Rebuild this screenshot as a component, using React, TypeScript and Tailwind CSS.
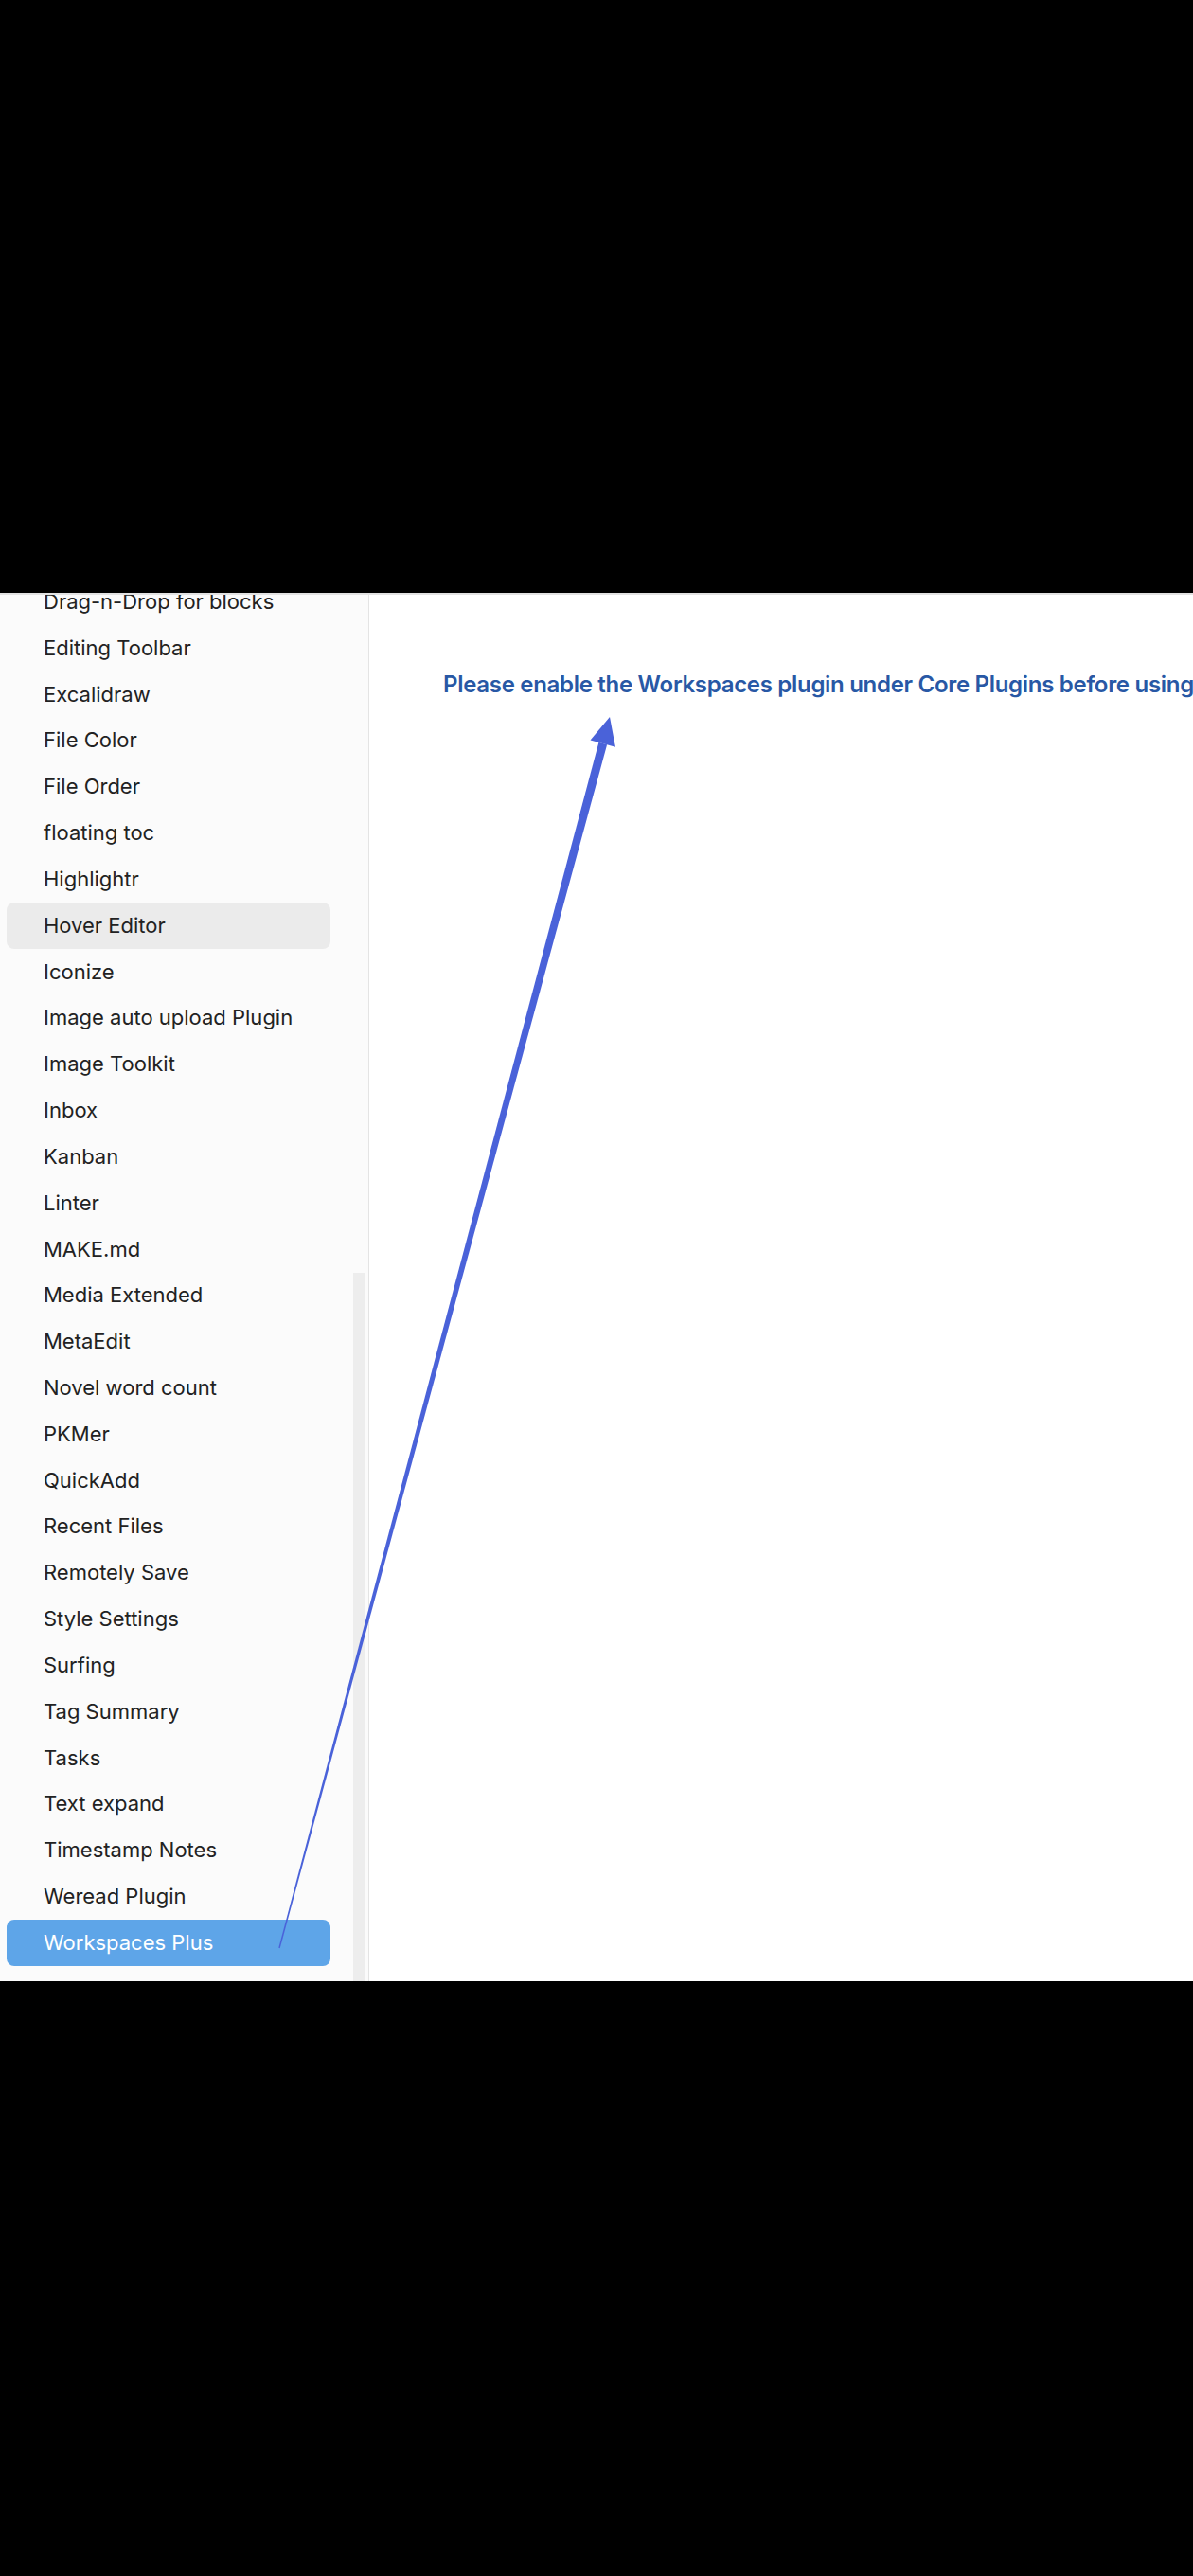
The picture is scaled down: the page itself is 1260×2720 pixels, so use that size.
const plugins = [
  "Drag-n-Drop for blocks",
  "Editing Toolbar",
  "Excalidraw",
  "File Color",
  "File Order",
  "floating toc",
  "Highlightr",
  "Hover Editor",
  "Iconize",
  "Image auto upload Plugin",
  "Image Toolkit",
  "Inbox",
  "Kanban",
  "Linter",
  "MAKE.md",
  "Media Extended",
  "MetaEdit",
  "Novel word count",
  "PKMer",
  "QuickAdd",
  "Recent Files",
  "Remotely Save",
  "Style Settings",
  "Surfing",
  "Tag Summary",
  "Tasks",
  "Text expand",
  "Timestamp Notes",
  "Weread Plugin",
  "Workspaces Plus",
];

const PluginRow = ({ name }: { name: string }) => {
  const active = name === "Workspaces Plus";
  const hovered = name === "Hover Editor";
  return (
    <div
      className={
        "h-[48.83px] flex items-center pl-[39px] rounded-[8px] text-[22px] " +
        (active ? "bg-[#5ea5e8] text-white" : hovered ? "bg-[#ebebeb] text-[#222222]" : "text-[#222222]")
      }
    >
      {name}
    </div>
  );
};

// hand-drawn annotation arrow, page coordinates
const Arrow = () => (
  <svg className="absolute inset-0 pointer-events-none" width="1260" height="2720" viewBox="0 0 1260 2720">
    <polygon points="294.3,2056.8 295.7,2057.2 641.1,786.2 632.4,783.8" fill="#4a62d9" />
    <polygon points="644,757 650,788.8 623.5,781.4" fill="#4a62d9" />
  </svg>
);

export default function App() {
  return (
    <div className="relative w-[1260px] h-[2720px] bg-black flex flex-col" style={{ fontFamily: "Inter, 'Noto Sans', sans-serif" }}>
      <div className="h-[626px] shrink-0" />
      <div className="h-[1466px] shrink-0 flex bg-white border-t-2 border-[#e2e2e2] overflow-hidden">
        <aside className="relative w-[390px] shrink-0 bg-[#fbfbfb] border-r border-[#e4e4e4] overflow-hidden">
          <div className="-mt-[17px] px-[7px] pr-[40px]">
            {plugins.map((p) => (
              <PluginRow key={p} name={p} />
            ))}
          </div>
          <div className="absolute right-[4px] top-[716px] bottom-0 w-[12px] bg-[#ededed]" />
        </aside>
        <main className="flex-1 min-w-0 pl-[78px] pt-[80px] overflow-hidden">
          <p className="text-[24px] leading-[30px] font-semibold text-[#2858a5] whitespace-nowrap tracking-[-0.3px]">
            Please enable the Workspaces plugin under Core Plugins before using this plugin
          </p>
        </main>
      </div>
      <Arrow />
    </div>
  );
}
